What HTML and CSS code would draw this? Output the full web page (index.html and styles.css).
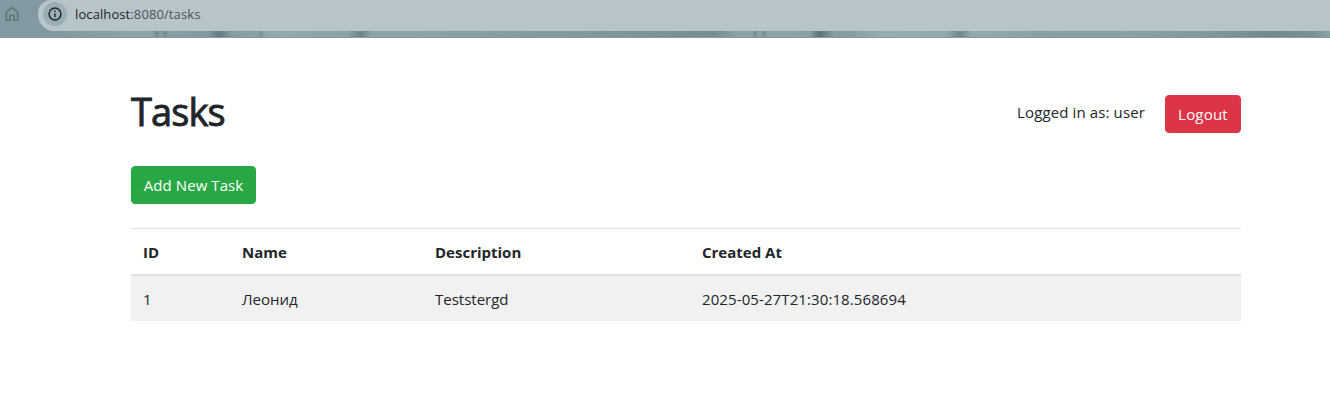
FILE: index.html
```html
<!DOCTYPE html>
<html lang="en">
<head>
<meta charset="utf-8">
<title>Tasks</title>
<link rel="stylesheet" href="styles.css">
</head>
<body>
<header class="toolbar">
  <svg class="home" width="14" height="16" viewBox="0 0 14 16" fill="none" stroke="#69727a" stroke-width="1.6"><path d="M1.3 14.2V6.2L7 1.6l5.700 4.600v8H8.900V9.300H5.100v4.900z"/></svg>
  <div class="address">
    <span class="site-info"><svg width="14" height="14" viewBox="0 0 14 14"><circle cx="7" cy="7" r="5.900" fill="none" stroke="#20282d" stroke-width="1.500"/><path d="M7 6.300v4M7 3.600v1.500" stroke="#20282d" stroke-width="1.400"/></svg></span>
    <span class="url"><span class="host">localhost</span>:8080/tasks</span>
  </div>
</header>
<main class="container">
  <div class="heading">
    <h1 class="title">Tasks</h1>
    <div class="session"><span class="user">Logged in as: user</span><button class="btn btn-danger">Logout</button></div>
  </div>
  <button class="btn btn-success">Add New Task</button>
  <table class="tasks">
    <colgroup><col class="c-id"><col class="c-name"><col class="c-desc"><col></colgroup>
    <thead><tr><th>ID</th><th>Name</th><th>Description</th><th>Created At</th></tr></thead>
    <tbody><tr><td>1</td><td>Леонид</td><td>Teststergd</td><td class="date">2025-05-27T21:30:18.568694</td></tr></tbody>
  </table>
</main>
</body>
</html>
```
FILE: styles.css
```css
* { box-sizing: border-box; }
body { margin: 0; background: #fff; color: #212529; font: 15px/24px "Open Sans", "Noto Sans", sans-serif; }
.toolbar {
  display: flex; height: 38px; padding-left: 5px; border-bottom: 1px solid #8897a0;
  background:
    linear-gradient(90deg, #6d838900 810px, #60777e 818px, #60777e 821px, #6d838900 834px),
    linear-gradient(90deg, #6d838900 348px, #70878e 359px, #70878e 362px, #6d838900 372px),
    linear-gradient(90deg, #6d838900 208px, #687e85 218px, #687e85 221px, #6d838900 232px),
    linear-gradient(90deg, #6d838900 153px, #748b92 157px, #6d838900 161px, #6d838900 162px, #748b92 165px, #6d838900 169px),
    linear-gradient(90deg, #6d838900 257px, #7b9299 261px, #6d838900 265px, #6d838900 752px, #748b92 755px, #6d838900 758px, #6d838900 761px, #748b92 764px, #6d838900 767px, #6d838900 945px, #70878e 960px, #6d838900 972px),
    linear-gradient(90deg, #829aa2 0, #8299a1 40px, #859ba2 70px, #8ea3aa 140px, #819aa1 200px, #8a9fa6 250px, #95aab1 280px, #8ba1a8 340px, #8fa5ac 390px, #879da4 500px, #7b9299 670px, #768d94 715px, #8ba1a8 735px, #8ca2a9 790px, #869ca3 850px, #97abb2 880px, #93a8af 990px, #879ea5 1050px, #8ba1a8 1130px, #7f969d 1220px, #73898f 1270px, #7c9299 1315px, #8ca2a9 1330px);
}
.home { margin-top: 6px; flex: none; }
.address { display: flex; flex: 1; align-items: center; height: 31px; margin-left: 19px; padding: 0 0 3px 5px; border-bottom-left-radius: 16px; border-top-left-radius: 13px; background: #b7c4ca; }
.site-info { display: flex; align-items: center; justify-content: center; width: 24px; height: 24px; border-radius: 50%; background: #9aaeb5; }
.url { margin-left: 8px; font-size: 13px; color: #4a5459; line-height: 20px; letter-spacing: .1px; }
.host { color: #1d252a; }
.container { padding: 49px 89px 0 131px; }
.heading { display: flex; justify-content: space-between; height: 79px; }
.title { margin: 0; font-size: 38px; font-weight: 400; line-height: 48px; letter-spacing: -.9px; -webkit-text-stroke: .9px currentColor; }
.session { display: flex; align-items: flex-start; padding-top: 8px; }
.user { margin: 5px 20px 0 0; letter-spacing: .12px; }
.btn { display: block; height: 38px; padding: 0; border: 1px solid; border-radius: 4px; font: inherit; color: #fff; text-align: center; white-space: nowrap; }
.btn-danger { width: 76px; background: #dc3545; border-color: #dc3545; letter-spacing: .2px; }
.btn-success { width: 125px; background: #28a745; border-color: #28a745; letter-spacing: .08px; }
.tasks { width: 100%; margin-top: 24px; table-layout: fixed; border-spacing: 0; }
.c-id { width: 99px; }
.c-name { width: 193px; }
.c-desc { width: 267px; }
th, td { padding: 0 12px; text-align: left; vertical-align: middle; }
th { height: 48px; border-top: 1px solid #dee2e6; border-bottom: 2px solid #dee2e6; font-weight: 700; }
td { height: 45px; background: #f1f1f1; }
.date { letter-spacing: .1px; }
```
